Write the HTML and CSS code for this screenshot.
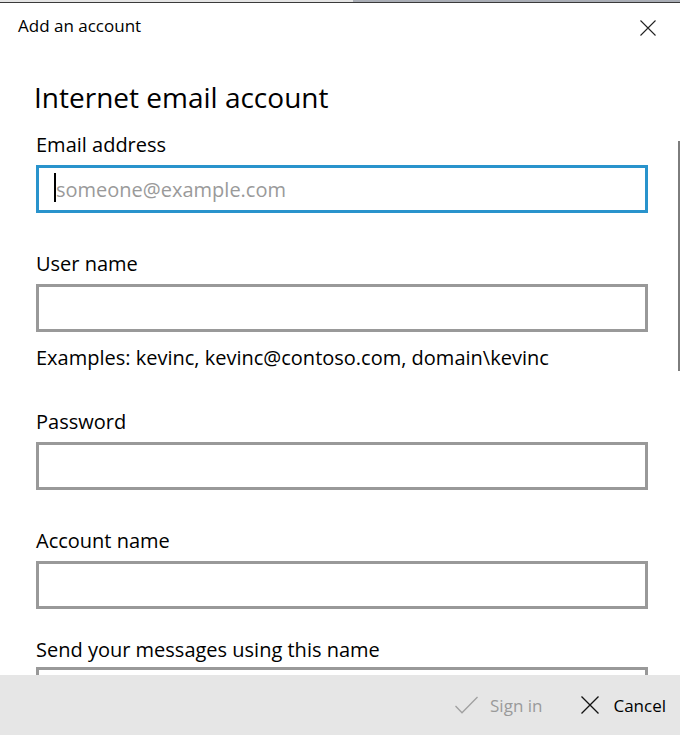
FILE: index.html
```html
<!DOCTYPE html>
<html lang="en">
<head>
  <meta charset="UTF-8" />
  <meta name="viewport" content="width=device-width, initial-scale=1.0" />
  <title>Add an account</title>
  <link rel="stylesheet" href="styles.css">
</head>
<body>
  <div class="topline">
    <span class="topline-left"></span>
    <span class="topline-right"></span>
  </div>

  <div class="titlebar">
    <span class="title">Add an account</span>
    <button class="close" aria-label="Close">
      <svg width="16" height="16" viewBox="0 0 16 16"><path d="M0.5 0.5 L15.5 15.5 M15.5 0.5 L0.5 15.5" stroke="#222" stroke-width="1.1" fill="none"/></svg>
    </button>
  </div>

  <div class="main">
    <div class="scroll">
      <h1>Internet email account</h1>

      <div class="field">
        <label for="email">Email address</label>
        <div class="box focused">
          <span class="caret"></span>
          <input id="email" type="text" placeholder="someone@example.com">
        </div>
      </div>

      <div class="field">
        <label for="user">User name</label>
        <div class="box"><input id="user" type="text"></div>
        <p class="hint">Examples: kevinc, kevinc@contoso.com, domain\kevinc</p>
      </div>

      <div class="field">
        <label for="pass">Password</label>
        <div class="box"><input id="pass" type="password"></div>
      </div>

      <div class="field">
        <label for="acct">Account name</label>
        <div class="box"><input id="acct" type="text"></div>
      </div>

      <div class="field last">
        <label for="sender">Send your messages using this name</label>
        <div class="box"><input id="sender" type="text"></div>
      </div>
    </div>
    <div class="scrollbar"></div>
  </div>

  <div class="footer">
    <button class="action disabled">
      <svg width="23" height="18" viewBox="0 0 23 18"><path d="M0.5 10 L7 16.8 L22.5 1" stroke="#a0a0a0" stroke-width="1.3" fill="none"/></svg>
      <span>Sign in</span>
    </button>
    <button class="action">
      <svg width="18" height="18" viewBox="0 0 18 18"><path d="M0.5 0.5 L17.5 17.5 M17.5 0.5 L0.5 17.5" stroke="#111" stroke-width="1.3" fill="none"/></svg>
      <span>Cancel</span>
    </button>
  </div>
</body>
</html>
```

FILE: styles.css
```css
html, body {
  margin: 0;
  height: 100%;
}
body {
  font-family: 'Open Sans', 'Noto Sans', sans-serif;
  color: #000;
  background-color: #fff;
  display: flex;
  flex-direction: column;
  overflow: hidden;
}

/* window edge */
.topline {
  display: flex;
  height: 2px;
  border-bottom: 1px solid #3a3a3a;
  flex-shrink: 0;
}
.topline-left {
  width: 353px;
  background-color: #e4e4e4;
}
.topline-right {
  flex: 1;
  background-color: #a9adb5;
}

.titlebar {
  display: flex;
  justify-content: space-between;
  align-items: flex-start;
  height: 52px;
  padding: 12px 24px 0 18px;
  box-sizing: border-box;
  flex-shrink: 0;
}
.title {
  font-size: 17px;
  line-height: 22px;
}
.close {
  border: none;
  background: none;
  padding: 0;
  margin-top: 5px;
  width: 16px;
  height: 16px;
  cursor: pointer;
}
.close svg {
  display: block;
}

.main {
  flex: 1;
  display: flex;
  overflow: hidden;
  position: relative;
}
.scroll {
  flex: 1;
  padding: 23px 32px 0 36px;
}
.scrollbar {
  position: absolute;
  right: 0;
  top: 86px;
  width: 2px;
  height: 230px;
  background-color: #7d7d7d;
}

h1 {
  font-size: 28px;
  font-weight: normal;
  line-height: 38px;
  margin: 0 0 16px -2px;
}

.field {
  margin-bottom: 38px;
}
.field label {
  display: block;
  font-size: 20px;
  line-height: 26px;
  margin-bottom: 7px;
}
.field.last {
  margin-top: -10px;
}
.field.last label {
  margin-bottom: 4px;
}
.box {
  position: relative;
  height: 48px;
  border: 3px solid #999;
  box-sizing: border-box;
}
.box.focused {
  border-color: #2993cc;
}
.box input {
  width: 100%;
  height: 100%;
  box-sizing: border-box;
  border: none;
  outline: none;
  padding: 0 0 0 17px;
  font-family: 'Open Sans', 'Noto Sans', sans-serif;
  font-size: 20px;
  background: transparent;
}
.box input::placeholder {
  color: #9a9a9a;
}
.caret {
  position: absolute;
  left: 15px;
  top: 5px;
  width: 2px;
  height: 29px;
  background-color: #000;
}
.hint {
  font-size: 20px;
  line-height: 26px;
  margin: 13px 0 0;
}

.footer {
  flex-shrink: 0;
  height: 60px;
  background-color: #e6e6e6;
  display: flex;
  justify-content: flex-end;
  align-items: center;
  gap: 39px;
  padding-right: 14px;
}
.action {
  display: flex;
  align-items: center;
  gap: 14px;
  border: none;
  background: none;
  padding: 0;
  font-family: 'Open Sans', 'Noto Sans', sans-serif;
  font-size: 17px;
  color: #000;
  cursor: pointer;
}
.action.disabled {
  gap: 12px;
  color: #9a9a9a;
  cursor: default;
}
.action svg {
  display: block;
}
```
